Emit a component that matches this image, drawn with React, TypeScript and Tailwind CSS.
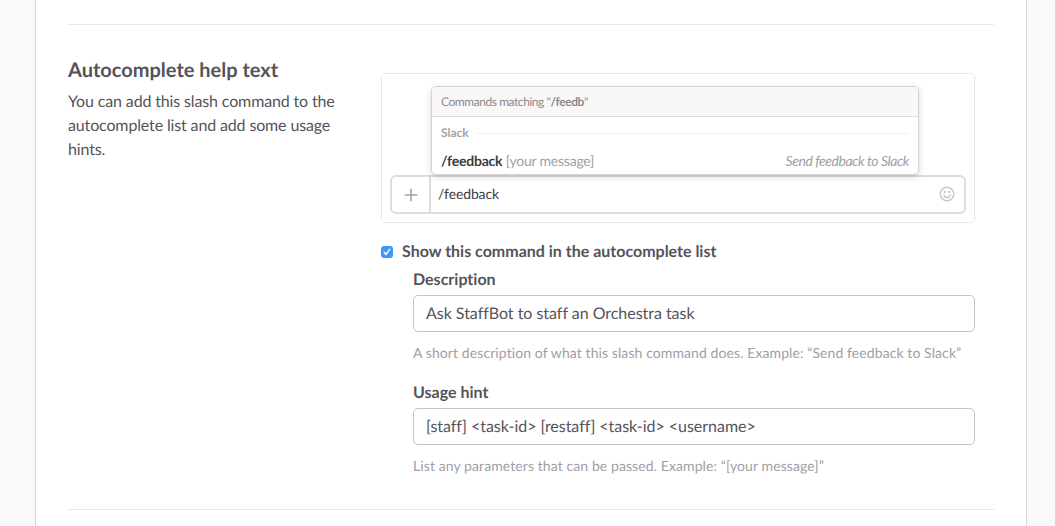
import type { ReactNode } from "react";

function Plus() {
  return (
    <svg width="14" height="14" viewBox="0 0 14 14" stroke="#a3a3a6" strokeWidth="1.6" fill="none">
      <path d="M7 0.7V13.3M0.7 7H13.3" />
    </svg>
  );
}

function Smiley() {
  return (
    <svg width="16" height="16" viewBox="0 0 16 16" fill="none" stroke="#c8c8ca" strokeWidth="1.5" strokeLinecap="round">
      <circle cx="8" cy="8" r="6.8" />
      <path d="M4.8 9.3C5.4 10.8 6.5 11.5 8 11.5S10.6 10.8 11.2 9.3" />
      <circle cx="5.8" cy="6" r="1.15" fill="#c8c8ca" stroke="none" />
      <circle cx="10.2" cy="6" r="1.15" fill="#c8c8ca" stroke="none" />
    </svg>
  );
}

function Preview() {
  return (
    <div className="h-[150px] rounded-[5px] border border-[#e8e8e8] px-2 pt-3">
      <div className="relative z-10 ml-[41px] h-[89px] w-[488px] rounded-[5px] border border-[#d4d4d4] bg-white shadow-[0_2px_6px_rgba(0,0,0,0.16)]">
        <div className="flex h-[30px] items-center rounded-t-[4px] border-b border-[#dddddd] bg-[#f9f8f7] px-[9px] text-[12px] leading-4 tracking-[-0.44px] text-[#8b898f]">
          <span className="whitespace-pre">Commands matching "<b>/feedb</b>"</span>
        </div>
        <div className="flex h-[32px] items-center gap-[7px] px-[9px] text-[12px] font-bold leading-4 text-[#a5a3aa]">
          Slack
          <span className="h-px flex-1 bg-[#f0f0f0]" />
        </div>
        <div className="flex h-[24px] items-center justify-between px-[9px] text-[14px] leading-4 text-[#9e9ea6]">
          <span className="tracking-[-0.22px]"><b className="text-[#3d3c40]">/feedback</b> [your message]</span>
          <i className="tracking-[-0.45px]">Send feedback to Slack</i>
        </div>
      </div>
      <div className="flex h-[39px] rounded-[6px] border-2 border-[#dddddd]">
        <div className="flex w-[39px] items-center justify-center border-r-2 border-[#dddddd]">
          <Plus />
        </div>
        <div className="flex flex-1 items-start justify-between pl-[7px] pr-[9px] pt-[9px] text-[14px] leading-4 tracking-[-0.12px] text-[#3d3c40]">
          /feedback
          <Smiley />
        </div>
      </div>
    </div>
  );
}

function Field({ label, value, children }: { label: string; value: string; children: ReactNode }) {
  return (
    <div className="h-[113px]">
      <div className="h-[28px] pt-px text-[16px] font-bold leading-6">{label}</div>
      <div className="flex h-[37px] items-start rounded-[5px] border border-[#c5c5c5] px-3 pt-[6px] text-[16px] leading-6 tracking-[-0.03px]">
        {value}
      </div>
      <p className="mt-[11px] whitespace-nowrap text-[14px] leading-5 tracking-[0.09px] text-[#9e9ea6]">{children}</p>
    </div>
  );
}

export default function App() {
  return (
    <div className="h-[526px] overflow-hidden bg-[#f9f9f9] pl-[35px] pr-[28px] font-[Lato,sans-serif] text-[16px] text-[#555459] [font-variant-ligatures:none] [text-rendering:geometricPrecision]">
      <main className="h-full border-x border-[#d8d8d8] bg-white px-8 pt-6">
        <section className="flex h-[486px] w-[926px] border-y border-[#e8e8e8]">
          <div className="w-[313px] pt-[33px]">
            <h2 className="text-[20px] font-bold leading-6">Autocomplete help text</h2>
            <p className="mt-2 w-[280px] leading-6 tracking-[-0.14px]">
              You can add this slash command to the autocomplete list and add some usage hints.
            </p>
          </div>
          <div className="w-[594px] pt-12">
            <Preview />
            <div className="mt-4 flex h-[28px] items-start pt-px font-bold leading-6">
              <span className="mr-[9px] mt-[6px] flex size-3 items-center justify-center rounded-[3px] bg-[#3b99fc]">
                <svg width="8" height="8" viewBox="0 0 8 8" fill="none" stroke="white" strokeWidth="1.5" strokeLinecap="round" strokeLinejoin="round">
                  <path d="M1.3 4.4L3.1 6.4L6.7 1.4" />
                </svg>
              </span>
              Show this command in the autocomplete list
            </div>
            <div className="pl-8">
              <Field label="Description" value="Ask StaffBot to staff an Orchestra task">
                A short description of what this slash command does. Example: “Send feedback to Slack”
              </Field>
              <Field label="Usage hint" value="[staff] <task-id> [restaff] <task-id> <username>">
                List any parameters that can be passed. Example: “[your message]”
              </Field>
            </div>
          </div>
        </section>
      </main>
    </div>
  );
}
